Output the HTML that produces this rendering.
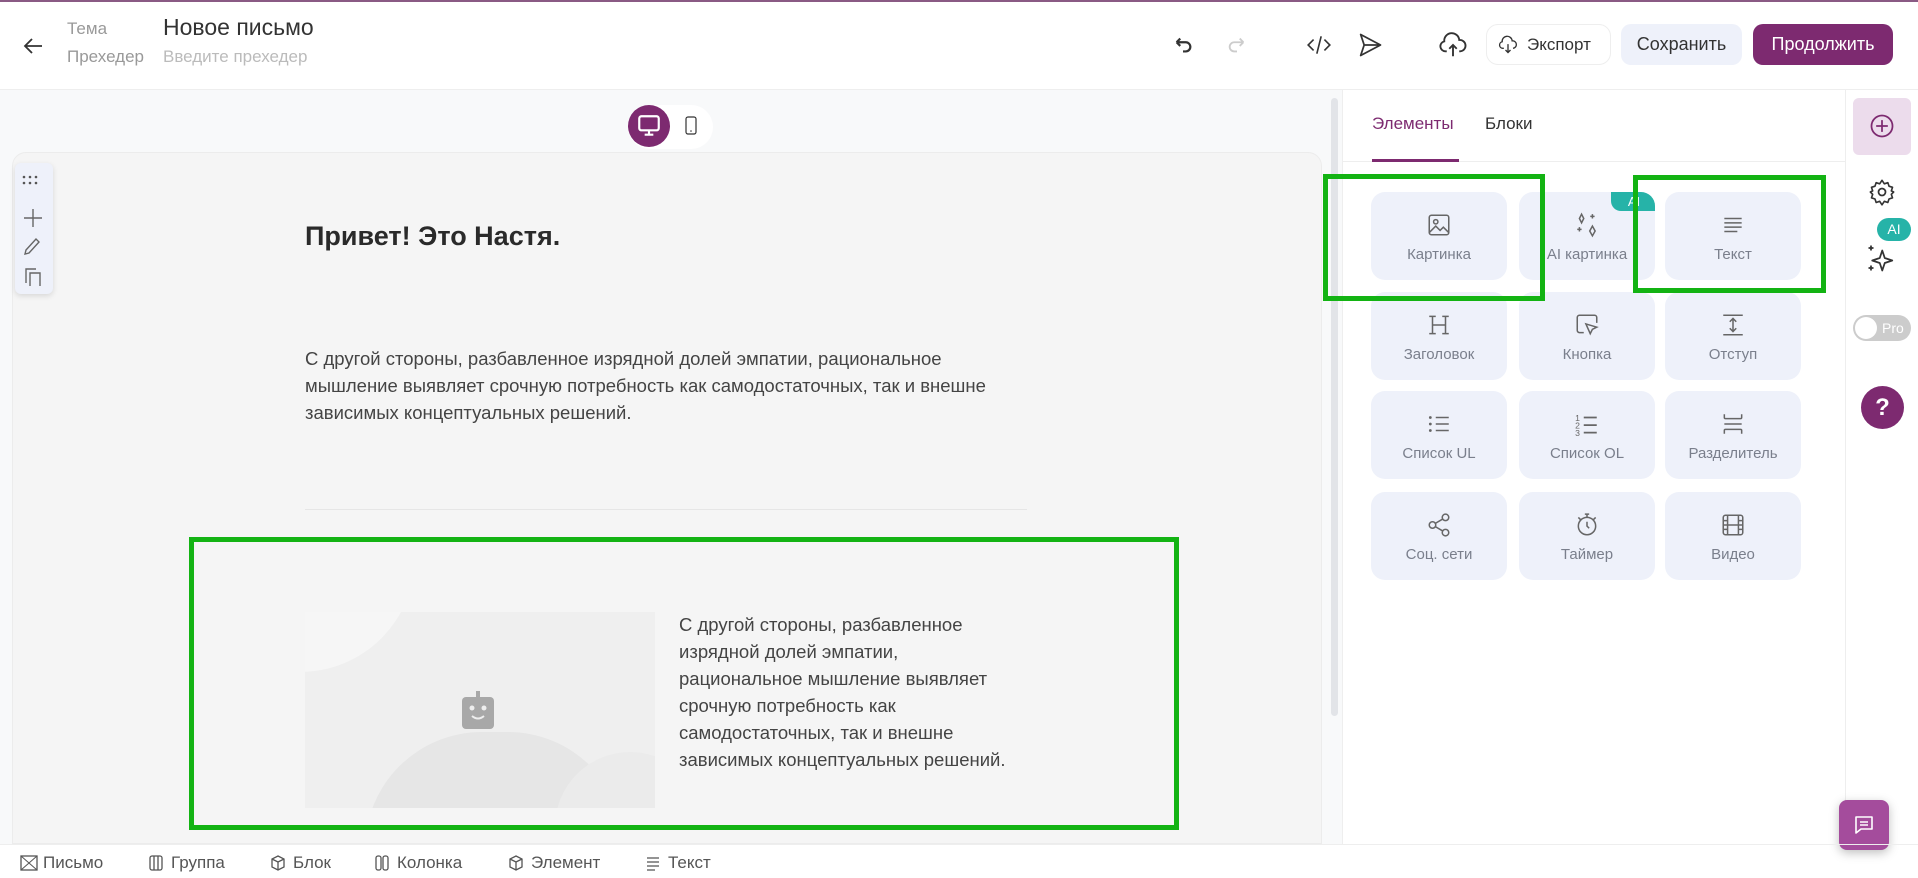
<!DOCTYPE html>
<html><head><meta charset="utf-8"><style>
*{box-sizing:border-box;margin:0;padding:0}
html,body{width:1918px;height:878px;overflow:hidden}
body{background:#fff;font-family:"Liberation Sans","Noto Sans CJK SC",sans-serif;position:relative;color:#333}
.a{position:absolute}
svg{display:block}
.tile{position:absolute;width:136px;height:88px;background:#eef1fa;border-radius:14px;text-align:center;color:#7a7f8c;font-size:15px}
.tile svg{position:absolute;left:55px;top:20px}
.tile span{position:absolute;left:0;right:0;top:54px}
.gb{position:absolute;border:5px solid #13b313}
.bc{position:absolute;top:853px;font-size:17px;color:#555;line-height:20px}
.bi{position:absolute;top:855px}
</style></head><body>
<div class="a" style="left:0;top:0;width:1918px;height:2px;background:#8a5a84"></div>
<svg class="a" style="left:22px;top:34px" width="24" height="24" viewBox="0 0 24 24"><path d="M20 12H4M10 5l-7 7 7 7" fill="none" stroke="#333" stroke-width="1.8"/></svg>
<div class="a" style="left:67px;top:19px;font-size:17px;color:#999">Тема</div>
<div class="a" style="left:163px;top:14px;font-size:23px;color:#333">Новое письмо</div>
<div class="a" style="left:67px;top:47px;font-size:17px;color:#999">Прехедер</div>
<div class="a" style="left:163px;top:47px;font-size:17px;color:#bbb">Введите прехедер</div>
<svg class="a" style="left:1172px;top:34px" width="22" height="22" viewBox="0 0 24 24"><path d="M5 9h10a5 5 0 0 1 0 10h-3M5 9l4-4M5 9l4 4" fill="none" stroke="#333" stroke-width="2.4"/></svg>
<svg class="a" style="left:1226px;top:34px" width="22" height="22" viewBox="0 0 24 24"><path d="M19 9H9a5 5 0 0 0 0 10h3M19 9l-4-4M19 9l-4 4" fill="none" stroke="#ccc" stroke-width="2"/></svg>
<svg class="a" style="left:1306px;top:32px" width="26" height="26" viewBox="0 0 24 24"><path d="M7 7l-5 5 5 5M17 7l5 5-5 5M14 4l-4 16" fill="none" stroke="#333" stroke-width="1.5"/></svg>
<svg class="a" style="left:1356px;top:31px" width="28" height="28" viewBox="0 0 24 24"><path d="M4 3l17 9-17 9 3-9zM7 12h14" fill="none" stroke="#333" stroke-width="1.5" stroke-linejoin="round"/></svg>
<svg class="a" style="left:1438px;top:30px" width="30" height="30" viewBox="0 0 24 24"><path d="M7 17H6a4 4 0 0 1-1-7.9A6 6 0 0 1 17 8a4.5 4.5 0 0 1 1 9h-1M12 21v-9M9 15l3-3 3 3" fill="none" stroke="#333" stroke-width="1.5"/></svg>
<div class="a" style="left:1486px;top:24px;width:125px;height:41px;border:1px solid #eee;border-radius:12px;font-size:17px;color:#333;line-height:39px;padding-left:40px">Экспорт</div>
<svg class="a" style="left:1498px;top:35px" width="20" height="20" viewBox="0 0 24 24"><path d="M7 16H6a4 4 0 0 1-1-7.9A6 6 0 0 1 17 7a4.5 4.5 0 0 1 1 9M12 11v10M9 18l3 3 3-3" fill="none" stroke="#333" stroke-width="1.6"/></svg>
<div class="a" style="left:1621px;top:24px;width:121px;height:41px;background:#eef1fa;border-radius:10px;font-size:18px;color:#333;line-height:41px;text-align:center">Сохранить</div>
<div class="a" style="left:1753px;top:24px;width:140px;height:41px;background:#7d2a70;border-radius:10px;font-size:18px;color:#fff;line-height:41px;text-align:center">Продолжить</div>
<div class="a" style="left:0;top:89px;width:1918px;height:1px;background:#eee"></div>
<div class="a" style="left:0;top:90px;width:1342px;height:754px;background:#f8f9fa"></div>
<div class="a" style="left:12px;top:152px;width:1310px;height:692px;background:#f5f5f5;border:1px solid #ececec;border-radius:14px 14px 0 0"></div>
<div class="a" style="left:628px;top:105px;width:85px;height:44px;background:#fff;border-radius:22px"></div>
<div class="a" style="left:628px;top:105px;width:42px;height:42px;background:#7d2a70;border-radius:50%"></div>
<svg class="a" style="left:636px;top:113px" width="26" height="26" viewBox="0 0 24 24"><rect x="3" y="3" width="18" height="13" rx="2" fill="none" stroke="#fff" stroke-width="2"/><path d="M12 16v4M8 20h8" stroke="#fff" stroke-width="2"/></svg>
<svg class="a" style="left:681px;top:115px" width="20" height="22" viewBox="0 0 20 22"><rect x="5" y="2" width="10" height="17" rx="2" fill="none" stroke="#333" stroke-width="1.2"/><circle cx="10" cy="16" r=".8" fill="#333"/></svg>
<div class="a" style="left:15px;top:163px;width:38px;height:131px;background:#eef1fa;border-radius:6px;box-shadow:0 2px 6px rgba(0,0,0,.12)"></div>
<svg class="a" style="left:22px;top:174px" width="24" height="112" viewBox="0 0 24 112"><g fill="#555"><circle cx="2" cy="3" r="1.3"/><circle cx="8" cy="3" r="1.3"/><circle cx="14" cy="3" r="1.3"/><circle cx="2" cy="9" r="1.3"/><circle cx="8" cy="9" r="1.3"/><circle cx="14" cy="9" r="1.3"/></g><path d="M11 35v18M2 44h18M4 76l10-11 3 3-10 11-4 1z M4 109V95h10M8 99h10v14H8z" fill="none" stroke="#666" stroke-width="1.4"/></svg>
<div class="a" style="left:305px;top:221px;font-size:27px;font-weight:bold;color:#2a2a2a">Привет! Это Настя.</div>
<div class="a" style="left:305px;top:345px;width:700px;font-size:18.5px;line-height:27px;color:#444">С другой стороны, разбавленное изрядной долей эмпатии, рациональное мышление выявляет срочную потребность как самодостаточных, так и внешне зависимых концептуальных решений.</div>
<div class="a" style="left:305px;top:509px;width:722px;height:1px;background:#e6e6e6"></div>
<div class="a" style="left:305px;top:612px;width:350px;height:196px;background:#efefef;overflow:hidden">
<div class="a" style="left:60px;top:120px;width:260px;height:260px;border-radius:45%;background:#e6e6e6"></div>
<div class="a" style="left:250px;top:140px;width:150px;height:150px;border-radius:50%;background:#ebebeb"></div>
<div class="a" style="left:-120px;top:-170px;width:230px;height:230px;border-radius:50%;background:#f6f6f6"></div>
</div>
<svg class="a" style="left:460px;top:691px" width="36" height="40" viewBox="0 0 36 40"><rect x="2" y="6" width="32" height="32" rx="4" fill="#a8a8a8"/><rect x="16" y="0" width="4" height="7" fill="#a8a8a8"/><circle cx="12" cy="17" r="2.5" fill="#eee"/><circle cx="24" cy="17" r="2.5" fill="#eee"/><path d="M12 25q6 5 12 0" stroke="#eee" stroke-width="2" fill="none"/></svg>
<div class="a" style="left:679px;top:611px;white-space:nowrap;font-size:18.5px;line-height:27px;color:#444">С другой стороны, разбавленное<br>изрядной долей эмпатии,<br>рациональное мышление выявляет<br>срочную потребность как<br>самодостаточных, так и внешне<br>зависимых концептуальных решений.</div>
<div class="gb" style="left:189px;top:537px;width:990px;height:293px"></div>
<div class="a" style="left:1331px;top:98px;width:7px;height:618px;background:#e2e4e8;border-radius:4px"></div>
<div class="a" style="left:1342px;top:90px;width:1px;height:754px;background:#eee"></div>
<div class="a" style="left:1372px;top:114px;font-size:17px;color:#7d2a70">Элементы</div>
<div class="a" style="left:1485px;top:114px;font-size:17px;color:#333">Блоки</div>
<div class="a" style="left:1343px;top:161px;width:502px;height:1px;background:#eee"></div>
<div class="a" style="left:1372px;top:159px;width:87px;height:3px;background:#7d2a70"></div>
<div class="tile" style="left:1371px;top:192px"><svg width="26" height="26" viewBox="0 0 24 24"><rect x="3" y="3" width="18" height="18" rx="2" fill="none" stroke="#666" stroke-width="1.4"/><circle cx="9" cy="9" r="2" fill="none" stroke="#666" stroke-width="1.4"/><path d="M3 19l6-6 4 4 3-3 5 5" fill="none" stroke="#666" stroke-width="1.4"/></svg><span>Картинка</span></div>
<div class="tile" style="left:1519px;top:192px;overflow:hidden"><svg width="26" height="26" viewBox="0 0 24 24"><path d="M7 2l2 4-2 4-2-4zM17 13l2.5 4.5L17 22l-2.5-4.5zM15 4h4M17 2v4M3 16h4M5 14v4" fill="none" stroke="#666" stroke-width="1.4"/></svg><span>AI картинка</span><div class="a" style="right:-2px;top:0;width:46px;height:19px;background:#26b3a8;border-radius:0 12px 0 10px;color:#fff;font-size:13px;line-height:19px">AI</div></div>
<div class="tile" style="left:1665px;top:192px"><svg width="26" height="26" viewBox="0 0 24 24"><path d="M4 6h16M4 10h16M4 14h16M4 18h12" stroke="#666" stroke-width="1.4"/></svg><span>Текст</span></div>
<div class="tile" style="left:1371px;top:292px"><svg width="26" height="26" viewBox="0 0 24 24"><path d="M6 4v16M18 4v16M6 12h12M3 4h6M15 4h6M3 20h6M15 20h6" stroke="#666" stroke-width="1.4"/></svg><span>Заголовок</span></div>
<div class="tile" style="left:1519px;top:292px"><svg width="26" height="26" viewBox="0 0 24 24"><path d="M9 19H5a2 2 0 0 1-2-2V5a2 2 0 0 1 2-2h14a2 2 0 0 1 2 2v5M11 11l10 3-4 2-2 4z" fill="none" stroke="#666" stroke-width="1.4"/></svg><span>Кнопка</span></div>
<div class="tile" style="left:1665px;top:292px"><svg width="26" height="26" viewBox="0 0 24 24"><path d="M3 3h18M3 21h18M12 6v12M9 9l3-3 3 3M9 15l3 3 3-3" fill="none" stroke="#666" stroke-width="1.4"/></svg><span>Отступ</span></div>
<div class="tile" style="left:1371px;top:391px"><svg width="26" height="26" viewBox="0 0 24 24"><circle cx="4" cy="6" r="1.3" fill="#666"/><circle cx="4" cy="12" r="1.3" fill="#666"/><circle cx="4" cy="18" r="1.3" fill="#666"/><path d="M9 6h12M9 12h12M9 18h12" stroke="#666" stroke-width="1.4"/></svg><span>Список UL</span></div>
<div class="tile" style="left:1519px;top:391px"><svg width="26" height="26" viewBox="0 0 24 24"><text x="1" y="9" font-size="8" fill="#666" font-family="Liberation Sans">1</text><text x="1" y="16" font-size="8" fill="#666" font-family="Liberation Sans">2</text><text x="1" y="23" font-size="8" fill="#666" font-family="Liberation Sans">3</text><path d="M9 6h12M9 13h12M9 20h12" stroke="#666" stroke-width="1.6"/></svg><span>Список OL</span></div>
<div class="tile" style="left:1665px;top:391px"><svg width="26" height="26" viewBox="0 0 24 24"><path d="M4 3v3a1 1 0 0 0 1 1h14a1 1 0 0 0 1-1V3M4 21v-3a1 1 0 0 1 1-1h14a1 1 0 0 1 1 1v3M4 12h16" fill="none" stroke="#666" stroke-width="1.4"/></svg><span>Разделитель</span></div>
<div class="tile" style="left:1371px;top:492px"><svg width="26" height="26" viewBox="0 0 24 24"><circle cx="18" cy="5" r="3" fill="none" stroke="#666" stroke-width="1.4"/><circle cx="6" cy="12" r="3" fill="none" stroke="#666" stroke-width="1.4"/><circle cx="18" cy="19" r="3" fill="none" stroke="#666" stroke-width="1.4"/><path d="M8.6 13.5l6.8 4M15.4 6.5l-6.8 4" stroke="#666" stroke-width="1.4"/></svg><span>Соц. сети</span></div>
<div class="tile" style="left:1519px;top:492px"><svg width="26" height="26" viewBox="0 0 24 24"><circle cx="12" cy="13" r="8" fill="none" stroke="#666" stroke-width="1.4"/><path d="M12 9v4l2 2M10 2h4M12 2v3M4 5l2 2M20 5l-2 2" fill="none" stroke="#666" stroke-width="1.4"/></svg><span>Таймер</span></div>
<div class="tile" style="left:1665px;top:492px"><svg width="26" height="26" viewBox="0 0 24 24"><rect x="3" y="3" width="18" height="18" rx="2" fill="none" stroke="#666" stroke-width="1.4"/><path d="M7 3v18M17 3v18M3 8h4M3 12h18M3 16h4M17 8h4M17 16h4" stroke="#666" stroke-width="1.4"/></svg><span>Видео</span></div>
<div class="gb" style="left:1323px;top:174px;width:222px;height:127px"></div>
<div class="gb" style="left:1633px;top:175px;width:193px;height:118px"></div>
<div class="a" style="left:1845px;top:90px;width:1px;height:754px;background:#eee"></div>
<div class="a" style="left:1853px;top:98px;width:58px;height:57px;background:#ecdcec;border-radius:6px"></div>
<svg class="a" style="left:1868px;top:112px" width="28" height="28" viewBox="0 0 24 24"><circle cx="12" cy="12" r="9" fill="none" stroke="#7d2a70" stroke-width="1.5"/><path d="M12 7v10M7 12h10" stroke="#7d2a70" stroke-width="1.5"/></svg>
<svg class="a" style="left:1868px;top:178px" width="28" height="28" viewBox="0 0 24 24"><circle cx="12" cy="12" r="3" fill="none" stroke="#333" stroke-width="1.5"/><path d="M12 2l2 3 3-1 1 3 3 1-1 3 2 1-2 2 1 3-3 1-1 3-3-1-2 3-2-3-3 1-1-3-3-1 1-3-2-2 2-1-1-3 3-1 1-3 3 1z" fill="none" stroke="#333" stroke-width="1.4" stroke-linejoin="round"/></svg>
<div class="a" style="left:1877px;top:218px;width:34px;height:23px;background:#26b3a8;border-radius:12px;color:#fff;font-size:14px;line-height:23px;text-align:center">AI</div>
<svg class="a" style="left:1866px;top:243px" width="30" height="30" viewBox="0 0 24 24"><path d="M13 6l2 6 6 2-6 2-2 6-2-6-6-2 6-2zM4 2v4M2 4h4M4 18v4M2 20h4" fill="none" stroke="#333" stroke-width="1.4" stroke-linejoin="round"/></svg>
<div class="a" style="left:1853px;top:315px;width:58px;height:26px;background:#ccc;border-radius:13px;color:#fff;font-size:14px;line-height:26px;padding-left:29px">Pro</div>
<div class="a" style="left:1855px;top:317px;width:22px;height:22px;background:#fff;border-radius:50%"></div>
<div class="a" style="left:1861px;top:386px;width:43px;height:43px;background:#7d2a70;border-radius:50%;color:#fff;font-size:24px;font-weight:bold;text-align:center;line-height:43px">?</div>
<div class="a" style="left:1839px;top:800px;width:50px;height:50px;background:#a44c9c;border-radius:8px;box-shadow:0 3px 10px rgba(0,0,0,.25)"></div>
<svg class="a" style="left:1852px;top:813px" width="24" height="24" viewBox="0 0 24 24"><path d="M4 4h16v12H9l-5 4z" fill="none" stroke="#fff" stroke-width="1.6" stroke-linejoin="round"/><path d="M8 9h8M8 12h8" stroke="#fff" stroke-width="1.6"/></svg>
<div class="a" style="left:0;top:844px;width:1918px;height:1px;background:#eee"></div>
<svg class="bi" style="left:20px" width="18" height="16" viewBox="0 0 18 16"><rect x="1" y="1" width="16" height="14" fill="none" stroke="#555" stroke-width="1.3"/><path d="M1 1l16 14M17 1L1 15" stroke="#555" stroke-width="1"/></svg>
<div class="bc" style="left:43px">Письмо</div>
<svg class="bi" style="left:148px" width="16" height="16" viewBox="0 0 16 16"><rect x="2" y="1" width="12" height="14" rx="2" fill="none" stroke="#555" stroke-width="1.3"/><path d="M6 1v14M10 1v14" stroke="#555" stroke-width="1.3"/></svg>
<div class="bc" style="left:171px">Группа</div>
<svg class="bi" style="left:270px" width="16" height="16" viewBox="0 0 16 16"><path d="M8 1l6 3v8l-6 3-6-3V4zM2 4l6 3 6-3M8 7v8" fill="none" stroke="#555" stroke-width="1.3"/></svg>
<div class="bc" style="left:293px">Блок</div>
<svg class="bi" style="left:374px" width="16" height="16" viewBox="0 0 16 16"><rect x="2" y="1" width="5" height="14" rx="2" fill="none" stroke="#555" stroke-width="1.3"/><rect x="9" y="1" width="5" height="14" rx="2" fill="none" stroke="#555" stroke-width="1.3"/></svg>
<div class="bc" style="left:397px">Колонка</div>
<svg class="bi" style="left:508px" width="16" height="16" viewBox="0 0 16 16"><path d="M8 1l6 3v8l-6 3-6-3V4zM2 4l6 3 6-3M8 7v8" fill="none" stroke="#555" stroke-width="1.3"/></svg>
<div class="bc" style="left:531px">Элемент</div>
<svg class="bi" style="left:645px" width="16" height="16" viewBox="0 0 16 16"><path d="M2 3h12M2 7h12M2 11h12M2 15h8" stroke="#555" stroke-width="1.3"/></svg>
<div class="bc" style="left:668px">Текст</div>
</body></html>
